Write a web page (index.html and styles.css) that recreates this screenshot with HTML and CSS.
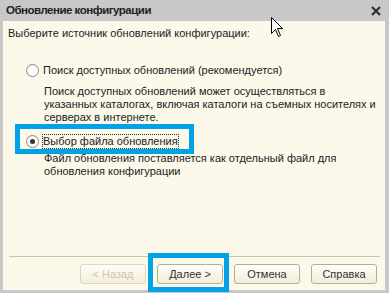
FILE: index.html
```html
<!DOCTYPE html>
<html lang="ru">
<head>
    <meta charset="UTF-8">
    <title>Обновление конфигурации</title>
    <link rel="stylesheet" href="styles.css">
</head>
<body>
    <div class="window">
        <div class="titlebar">
            <span class="title">Обновление конфигурации</span>
            <svg class="close" width="10" height="10" viewBox="0 0 10 10">
                <path d="M1 1 L9 9 M9 1 L1 9" stroke="#333" stroke-width="2.2" fill="none"/>
            </svg>
        </div>

        <div class="body">
            <p class="prompt">Выберите источник обновлений конфигурации:</p>

            <div class="option">
                <label class="radio-row">
                    <span class="radio"></span>
                    <span class="label">Поиск доступных обновлений (рекомендуется)</span>
                </label>
                <p class="hint">Поиск доступных обновлений может осуществляться в<br>указанных каталогах, включая каталоги на съемных носителях и<br>серверах в интернете.</p>
            </div>

            <div class="option">
                <label class="radio-row mark mark-option">
                    <span class="radio checked"></span>
                    <span class="label focus">Выбор файла обновления</span>
                </label>
                <p class="hint hint-file">Файл обновления поставляется как отдельный файл для<br>обновления конфигурации</p>
            </div>
        </div>

        <div class="footer">
            <div class="buttons">
                <button class="btn" disabled>&lt; Назад</button>
                <button class="btn mark mark-next">Далее &gt;</button>
                <button class="btn">Отмена</button>
                <button class="btn">Справка</button>
            </div>
        </div>

        <!-- курсор мыши поверх окна -->
        <svg class="cursor" width="13" height="20" viewBox="0 0 13 20">
            <path d="M0.5 0.5 L0.5 16.5 L4.5 12.5 L7.5 19.5 L9.5 18.5 L6.5 11.5 L11.5 11.5 Z" fill="#fff" stroke="#000" stroke-width="1"/>
        </svg>
    </div>
</body>
</html>
```

FILE: styles.css
```css
* {
    box-sizing: border-box;
}
body {
    margin: 0;
    background-color: #fcf9ea;
}
.window {
    position: relative;
    width: 389px;
    height: 293px;
    display: flex;
    flex-direction: column;
    background-color: #fcf9ea;
    border-left: 3px solid #c8c8c8;
    border-right: 4px solid #c8c8c8;
    border-bottom: 3px solid #c8c8c8;
    font-family: "Liberation Sans", Arial, sans-serif;
    font-size: 11px;
    line-height: 13px;
    color: #222;
}
.titlebar {
    height: 21px;
    flex-shrink: 0;
    display: flex;
    align-items: center;
    justify-content: space-between;
    padding: 0 4px 0 3px;
    background-color: #c8c8c8;
}
.title {
    font-weight: bold;
    font-size: 11.5px;
    letter-spacing: -0.5px;
    color: #222;
}
.close {
    display: block;
}
.body {
    padding: 6px 5px 0;
}
.prompt {
    margin: 0;
}
.option {
    margin-top: 24px;
}
.option + .option {
    margin-top: 10px;
}
.radio-row {
    display: inline-flex;
    align-items: center;
    gap: 4px;
    margin-left: 18px;
}
.radio {
    width: 13px;
    height: 13px;
    border-radius: 50%;
    border: 1px solid #8a8a8a;
    background: radial-gradient(circle at 60% 60%, #fff 40%, #e6e3da 100%);
    display: flex;
    align-items: center;
    justify-content: center;
}
.radio.checked::before {
    content: "";
    width: 5px;
    height: 5px;
    border-radius: 50%;
    background-color: #333;
}
.label.focus {
    outline: 1px dotted #333;
    outline-offset: 0;
}
.hint {
    margin: 5px 0 0 36px;
}
.hint-file {
    margin-top: 4px;
}
.footer {
    margin-top: auto;
    padding: 0 5px 6px 6px;
}
.buttons {
    display: flex;
    justify-content: flex-end;
    gap: 11px;
    border-top: 1px solid #cbc3a6;
    padding: 7px 3px 0 0;
}
.btn {
    width: 66px;
    height: 20px;
    padding: 0;
    font-family: "Liberation Sans", Arial, sans-serif;
    font-size: 11px;
    color: #333;
    border: 1px solid #b8ae8c;
    border-radius: 3px;
    background: linear-gradient(#fffefa, #f2eddb);
}
.btn:disabled {
    color: #d4c4a0;
    border-color: #ddd5bb;
}
.mark {
    position: relative;
}
.mark::after {
    content: "";
    position: absolute;
    border: 5px solid #00a2e8;
    pointer-events: none;
}
.mark-option::after {
    left: -11px;
    right: -16px;
    top: -11px;
    bottom: -6px;
}
.mark-next::after {
    left: -10px;
    right: -7px;
    top: -12px;
    bottom: -9px;
}
.cursor {
    position: absolute;
    left: 268px;
    top: 17px;
}
```
